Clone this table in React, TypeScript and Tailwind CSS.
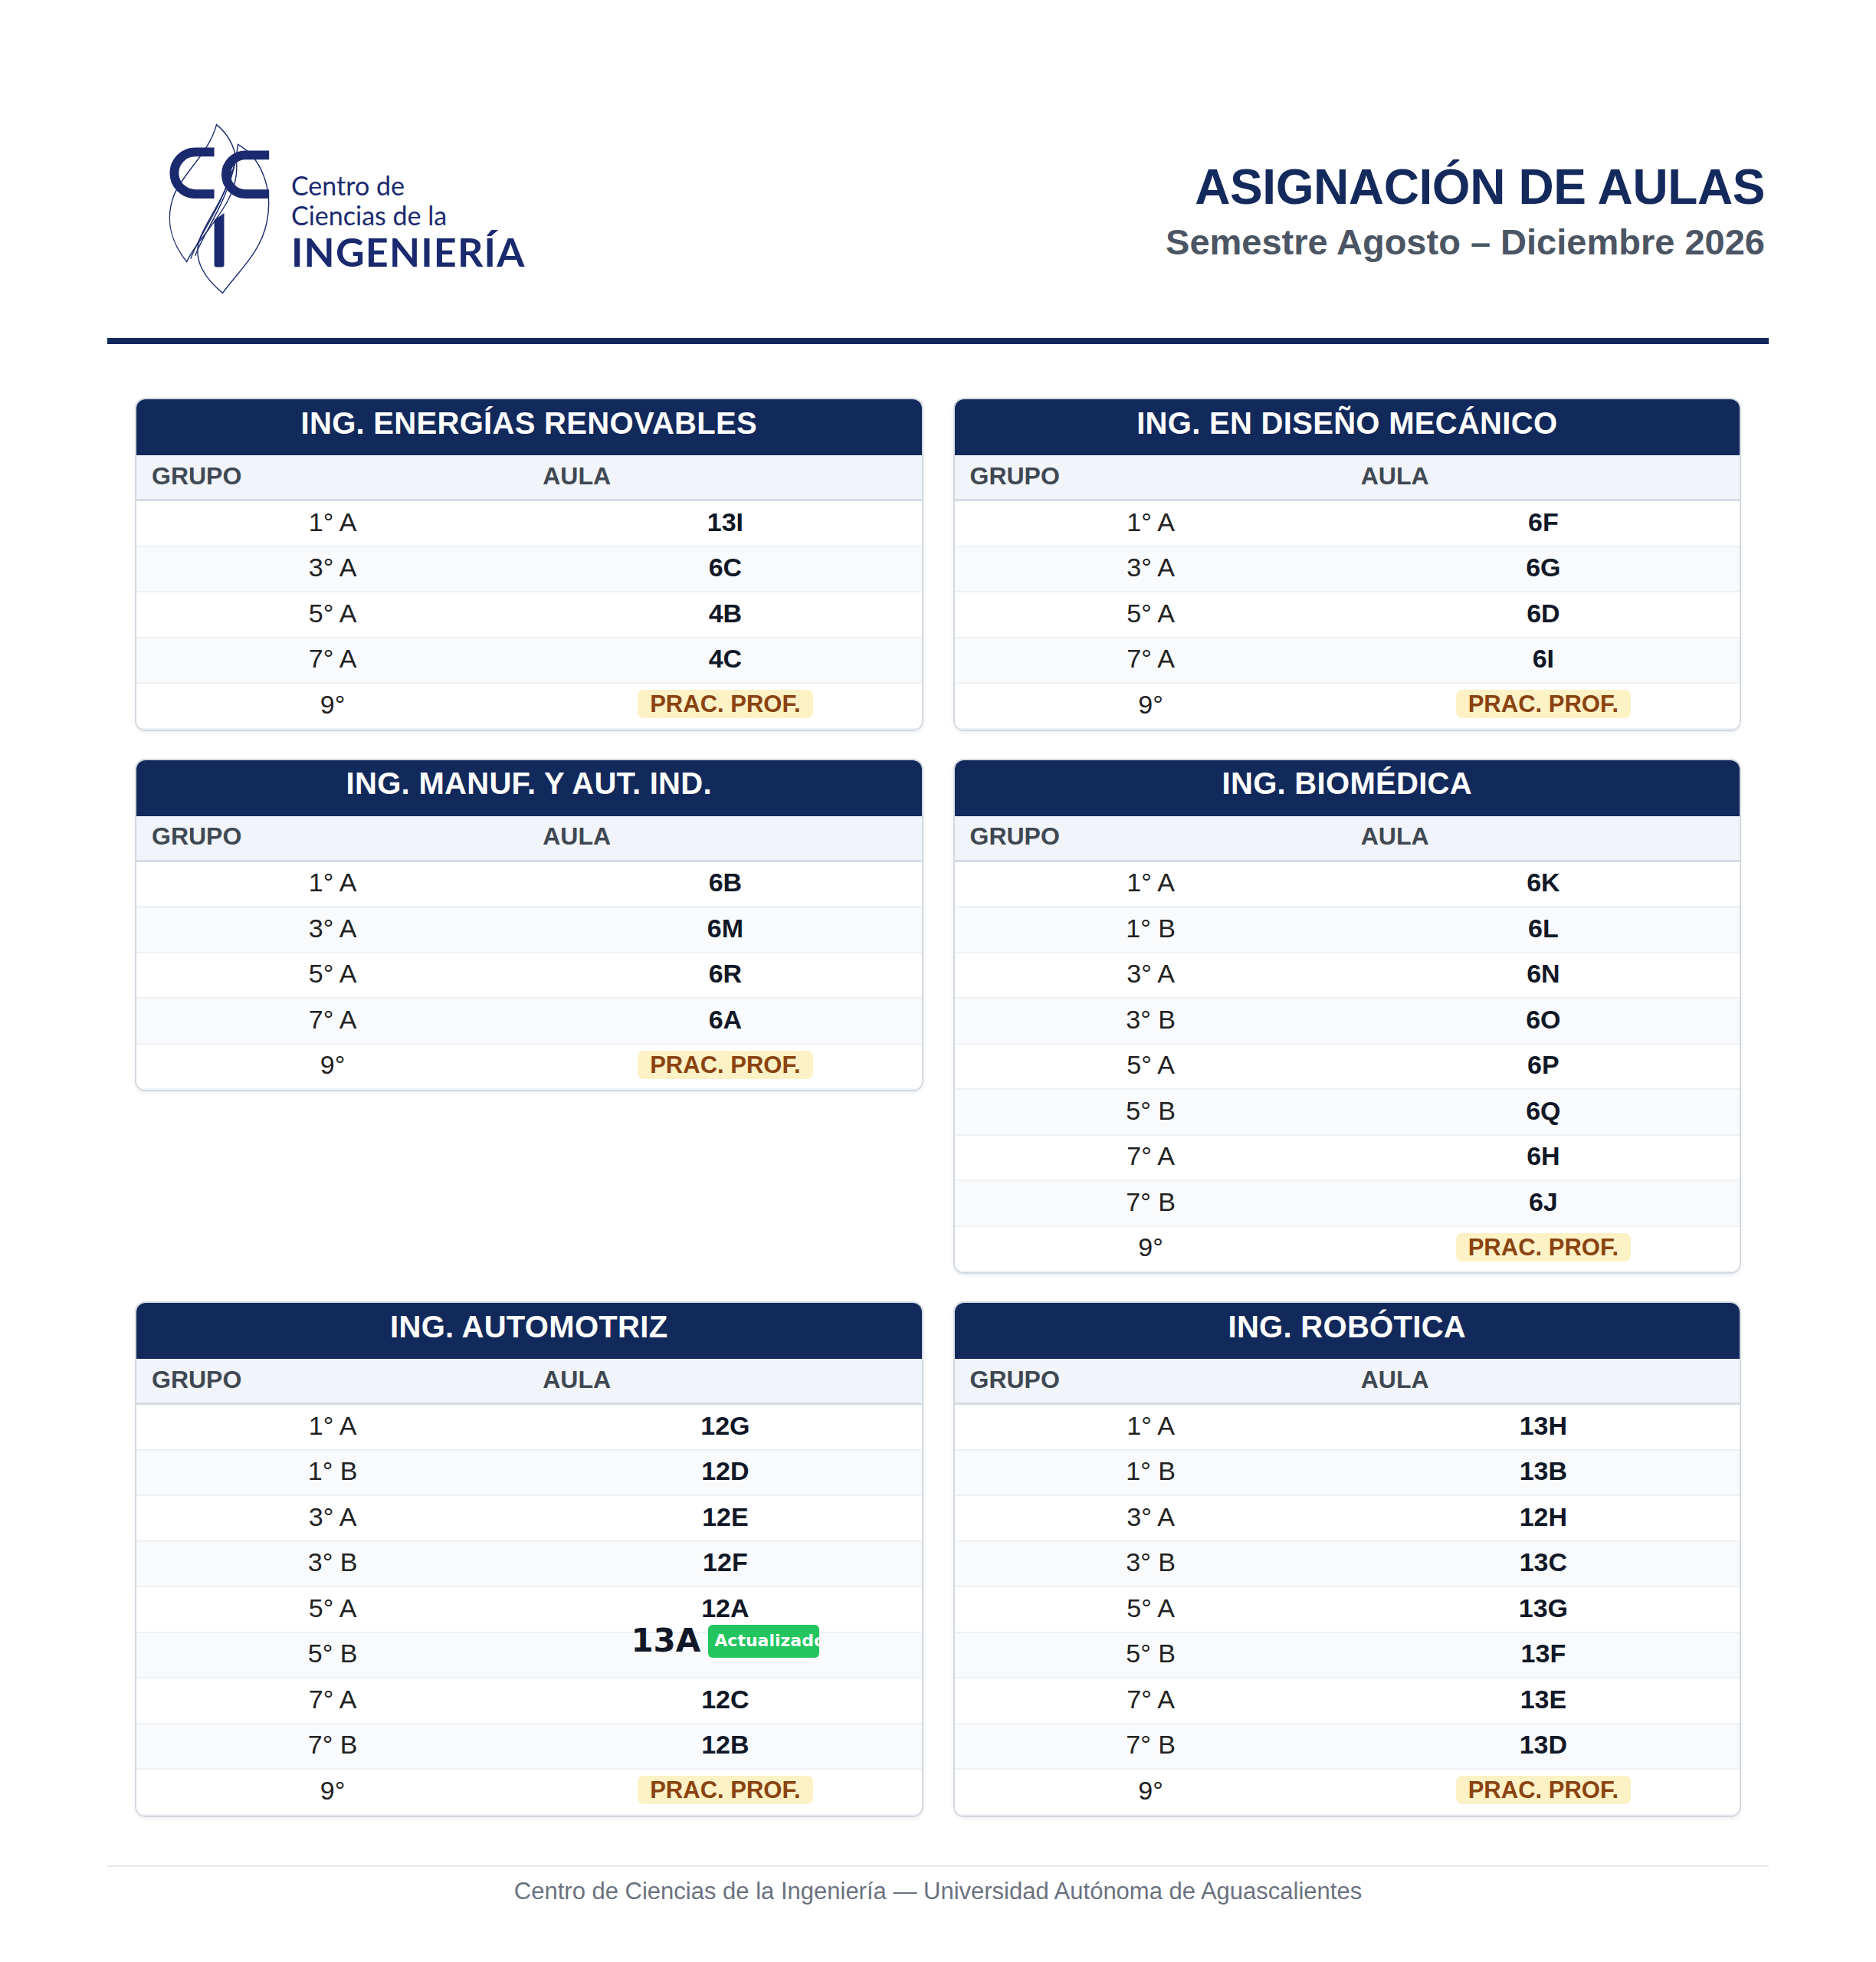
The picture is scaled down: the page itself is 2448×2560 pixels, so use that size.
import React from "react";

type Row = { g: string; a: string; prac?: boolean; updated?: boolean };
type Career = { name: string; rows: Row[] };

const prac = (): Row => ({ g: "9°", a: "PRAC. PROF.", prac: true });

const careers: Career[] = [
  {
    name: "ING. ENERGÍAS RENOVABLES",
    rows: [
      { g: "1° A", a: "13I" },
      { g: "3° A", a: "6C" },
      { g: "5° A", a: "4B" },
      { g: "7° A", a: "4C" },
      prac(),
    ],
  },
  {
    name: "ING. EN DISEÑO MECÁNICO",
    rows: [
      { g: "1° A", a: "6F" },
      { g: "3° A", a: "6G" },
      { g: "5° A", a: "6D" },
      { g: "7° A", a: "6I" },
      prac(),
    ],
  },
  {
    name: "ING. MANUF. Y AUT. IND.",
    rows: [
      { g: "1° A", a: "6B" },
      { g: "3° A", a: "6M" },
      { g: "5° A", a: "6R" },
      { g: "7° A", a: "6A" },
      prac(),
    ],
  },
  {
    name: "ING. BIOMÉDICA",
    rows: [
      { g: "1° A", a: "6K" },
      { g: "1° B", a: "6L" },
      { g: "3° A", a: "6N" },
      { g: "3° B", a: "6O" },
      { g: "5° A", a: "6P" },
      { g: "5° B", a: "6Q" },
      { g: "7° A", a: "6H" },
      { g: "7° B", a: "6J" },
      prac(),
    ],
  },
  {
    name: "ING. AUTOMOTRIZ",
    rows: [
      { g: "1° A", a: "12G" },
      { g: "1° B", a: "12D" },
      { g: "3° A", a: "12E" },
      { g: "3° B", a: "12F" },
      { g: "5° A", a: "12A" },
      { g: "5° B", a: "13A", updated: true },
      { g: "7° A", a: "12C" },
      { g: "7° B", a: "12B" },
      prac(),
    ],
  },
  {
    name: "ING. ROBÓTICA",
    rows: [
      { g: "1° A", a: "13H" },
      { g: "1° B", a: "13B" },
      { g: "3° A", a: "12H" },
      { g: "3° B", a: "13C" },
      { g: "5° A", a: "13G" },
      { g: "5° B", a: "13F" },
      { g: "7° A", a: "13E" },
      { g: "7° B", a: "13D" },
      prac(),
    ],
  },
];

function LogoMark() {
  return (
    <svg width="179" height="240" viewBox="0 0 180 240" fill="none" className="shrink-0">
      {/* flame outlines */}
      <g stroke="#1b2a6e" strokeWidth="1.4" fill="none">
        <path d="M82 12 C110 35 118 75 95 115 C75 150 52 170 43 192 C25 170 13 140 26 105 C38 75 72 50 82 12 Z" />
        <path d="M110 38 C140 55 157 95 148 140 C140 180 110 205 90 233 C68 215 50 190 60 162 C72 130 105 95 110 38 Z" />
        <path d="M48 188 C60 155 88 122 102 72" />
        <path d="M54 184 C66 152 94 118 107 60" />
      </g>
      {/* CCI letters */}
      <g stroke="#1b2a6e" strokeWidth="12" fill="none">
        <path d="M79 48 H54 A27.5 27.5 0 0 0 54 103 H79" />
        <path d="M151 52 H120 A25.5 25.5 0 0 0 120 103 H151" />
      </g>
      <path d="M79 137 L92 128 V196 Q92 199 89 199 H82 Q79 199 79 196 Z" fill="#1b2a6e" />
    </svg>
  );
}

function Logo() {
  return (
    <div className="ml-[61px] flex items-start">
      <LogoMark />
      <div className="pt-[72px] font-['Lato','Noto_Sans',sans-serif] text-[#1b2a6e]">
        <div className="text-[34px] leading-[39px]">Centro de</div>
        <div className="text-[34px] leading-[39px]">Ciencias de la</div>
        <div className="mt-[2px] text-[52px] font-bold leading-none tracking-[1.2px]">INGENIERÍA</div>
      </div>
    </div>
  );
}

function UpdatedCell({ value }: { value: string }) {
  return (
    <div className="flex -translate-y-[16px] items-center gap-[10px] font-['DejaVu_Sans',sans-serif]">
      <span className="text-[42px] font-bold leading-none text-[#111827]">{value}</span>
      <span className="flex h-[43px] w-[145px] items-center overflow-hidden whitespace-nowrap rounded-[6px] bg-[#22c55e] pl-[8px] text-[22px] font-bold text-white">
        Actualizado
      </span>
    </div>
  );
}

function CareerCard({ career }: { career: Career }) {
  return (
    <div className="overflow-hidden rounded-[14px] border-2 border-[#d3d9e1] bg-white shadow-[0_2px_5px_rgba(15,23,42,0.08)]">
      <div className="flex h-[73px] items-center justify-center bg-[#12295b] pb-[12px] text-[40px] font-bold leading-none tracking-[0.3px] text-white">
        {career.name}
      </div>
      <div className="grid h-[60px] grid-cols-2 items-center border-b-[3px] border-[#d6dce4] bg-[#f1f4f8] pb-[4px] text-[32px] font-bold leading-none text-[#3f4853]">
        <div className="pl-[20px]">GRUPO</div>
        <div className="pl-[18px]">AULA</div>
      </div>
      {career.rows.map((r, i) => (
        <div
          key={r.g}
          className={`grid h-[59.5px] grid-cols-2 items-center border-b-2 border-[#eef1f5] pb-[4px] text-[34px] leading-none ${
            i % 2 === 0 ? "bg-white" : "bg-[#f8fafc]"
          }`}
        >
          <div className="text-center text-[#222]">{r.g}</div>
          <div className="flex justify-center">
            {r.prac ? (
              <span className="rounded-[8px] bg-[#fdf1c6] px-[16px] py-[3px] text-[31px] font-bold text-[#8a4310]">
                {r.a}
              </span>
            ) : r.updated ? (
              <UpdatedCell value={r.a} />
            ) : (
              <span className="font-bold text-[#111827]">{r.a}</span>
            )}
          </div>
        </div>
      ))}
    </div>
  );
}

export default function App() {
  return (
    <div className="min-h-[2560px] bg-white font-['Liberation_Sans',Arial,sans-serif]">
      <div className="mx-auto w-[2168px]">
        <header className="flex h-[441px] items-start justify-between pt-[150px]">
          <Logo />
          <div className="mr-[5px] mt-[62px] text-right">
            <h1 className="text-[64px] font-bold leading-none tracking-[-0.4px] text-[#142a5c]">
              ASIGNACIÓN DE AULAS
            </h1>
            <p className="mt-[16px] text-[47px] font-bold leading-none text-[#4b5563]">
              Semestre Agosto – Diciembre 2026
            </p>
          </div>
        </header>
        <div className="h-[8px] bg-[#13295b]" />

        <main className="mt-[70px] grid grid-cols-2 items-start gap-x-[39px] gap-y-[36px] px-[36px]">
          {careers.map((c) => (
            <CareerCard key={c.name} career={c} />
          ))}
        </main>

        <footer className="mt-[63px] border-t-2 border-[#e5e7eb] pt-[16px] text-center text-[31px] leading-none text-[#6b7280]">
          Centro de Ciencias de la Ingeniería — Universidad Autónoma de Aguascalientes
        </footer>
      </div>
    </div>
  );
}
